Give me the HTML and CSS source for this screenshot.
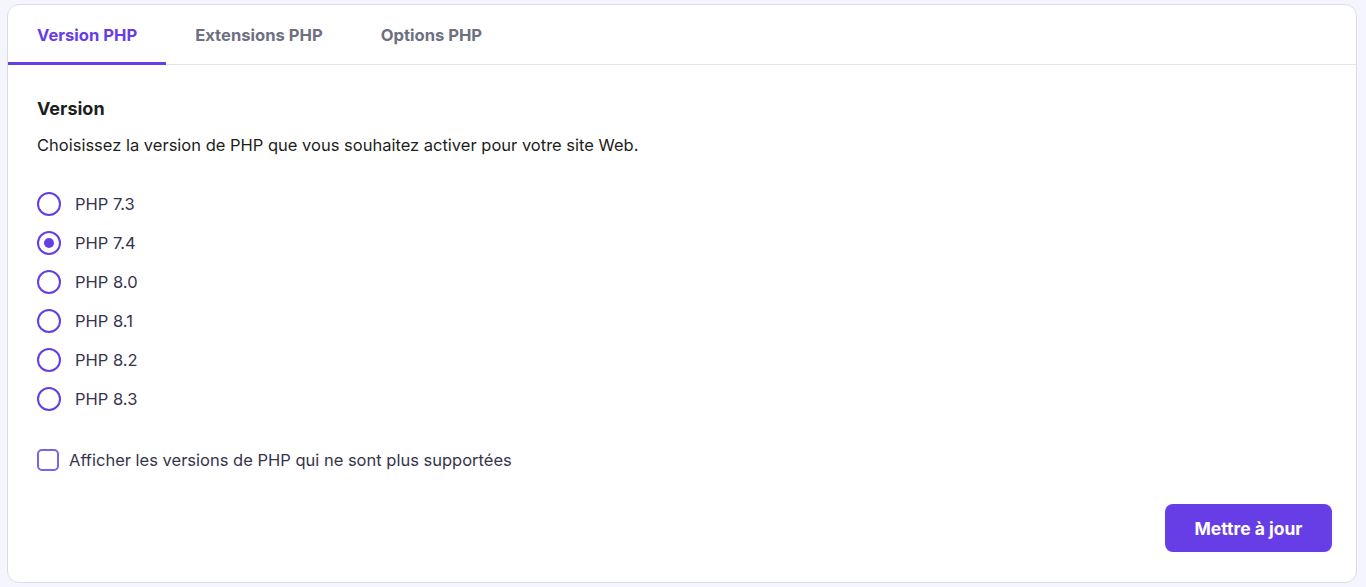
FILE: index.html
```html
<!DOCTYPE html>
<html lang="fr">
<head>
<meta charset="utf-8">
<link rel="stylesheet" href="styles.css">
</head>
<body>
<div class="card">
  <nav class="tabs">
    <div class="tab active">Version PHP</div>
    <div class="tab">Extensions PHP</div>
    <div class="tab">Options PHP</div>
  </nav>
  <section class="content">
    <h2 class="title">Version</h2>
    <p class="desc">Choisissez la version de PHP que vous souhaitez activer pour votre site Web.</p>
    <div class="radios">
      <label class="radio"><span class="dot"></span>PHP 7.3</label>
      <label class="radio checked"><span class="dot"></span>PHP 7.4</label>
      <label class="radio"><span class="dot"></span>PHP 8.0</label>
      <label class="radio"><span class="dot"></span>PHP 8.1</label>
      <label class="radio"><span class="dot"></span>PHP 8.2</label>
      <label class="radio"><span class="dot"></span>PHP 8.3</label>
    </div>
    <label class="check"><span class="box"></span>Afficher les versions de PHP qui ne sont plus supportées</label>
    <div class="actions">
      <button class="btn">Mettre à jour</button>
    </div>
  </section>
</div>
</body>
</html>
```
FILE: styles.css
```css
* { box-sizing: border-box; }
html, body { margin: 0; padding: 0; }
body {
  background: #f4f5fd;
  font-family: "Inter", "DejaVu Sans", sans-serif;
  color: #1d1e20;
  height: 587px;
  overflow: hidden;
}
.card {
  margin: 4px 9px 0 7px;
  height: 579px;
  background: #fff;
  border: 1px solid #dcdce6;
  border-radius: 12px;
  display: flex;
  flex-direction: column;
}
.tabs {
  display: flex;
  height: 60px;
  border-bottom: 1px solid #e3e3ea;
}
.tab {
  padding: 2px 29px 0;
  display: flex;
  align-items: center;
  font-size: 16.6px;
  font-weight: 700;
  color: #6d7081;
  border-bottom: 3px solid transparent;
  margin-bottom: -1px;
}
.tab.active {
  color: #673de6;
  border-bottom-color: #673de6;
}
.content {
  flex: 1;
  display: flex;
  flex-direction: column;
  padding: 32px 24px 30px 29px;
}
.title {
  margin: 0;
  font-size: 18px;
  line-height: 24px;
  font-weight: 700;
}
.desc {
  margin: 12px 0 0;
  font-size: 16.5px;
  line-height: 24px;
  color: #1d1e20;
}
.radios {
  margin-top: 35px;
  display: flex;
  flex-direction: column;
  gap: 15px;
}
.radio {
  display: flex;
  align-items: center;
  gap: 14px;
  font-size: 16.5px;
  line-height: 24px;
  color: #36344d;
}
.dot {
  width: 24px;
  height: 24px;
  border: 2px solid #673de6;
  border-radius: 50%;
  display: flex;
  align-items: center;
  justify-content: center;
}
.radio.checked .dot::after {
  content: "";
  width: 10px;
  height: 10px;
  border-radius: 50%;
  background: #673de6;
}
.check {
  margin-top: 37px;
  display: flex;
  align-items: center;
  gap: 10px;
  font-size: 16.5px;
  line-height: 24px;
  color: #36344d;
}
.box {
  width: 22px;
  height: 22px;
  border: 2px solid #7e63ea;
  border-radius: 5px;
}
.actions {
  margin-top: auto;
  display: flex;
  justify-content: flex-end;
}
.btn {
  font-family: inherit;
  width: 167px;
  height: 48px;
  border: none;
  border-radius: 8px;
  background: #673de6;
  color: #fff;
  font-size: 17.5px;
  font-weight: 700;
}
```
